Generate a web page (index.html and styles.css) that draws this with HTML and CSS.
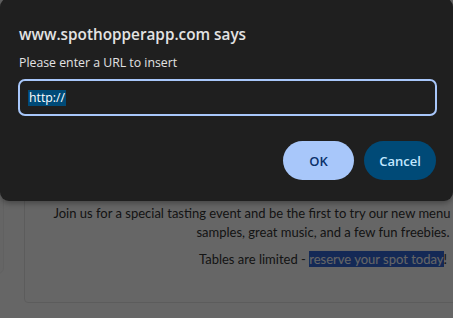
FILE: index.html
```html
<!DOCTYPE html>
<html lang="en">

<head>
	<meta charset="utf-8">
	<title>Event</title>
	<link rel="stylesheet" href="styles.css">
</head>

<body>
	<div class="page">
		<div class="side-panel"></div>
		<div class="event-card">
			<p>Join us for a special tasting event and be the first to try our new menu items and enjoy any free<br>samples, great music, and a few fun freebies.</p>
			<p>Tables are limited - <span class="selected">reserve your spot today</span>!</p>
		</div>
	</div>

	<!-- dim the page behind the prompt -->
	<div class="overlay"></div>

	<div class="dialog">
		<h1 class="dialog-title">www.spothopperapp.com says</h1>
		<p class="dialog-message">Please enter a URL to insert</p>
		<div class="dialog-input"><span class="input-selection">http://</span></div>
		<div class="dialog-buttons">
			<button class="btn btn-ok">OK</button>
			<button class="btn btn-cancel">Cancel</button>
		</div>
	</div>
</body>

</html>
```

FILE: styles.css
```css
/* common css */
* {
	margin: 0;
	padding: 0;
	box-sizing: border-box;
}

body {
	width: 453px;
	height: 318px;
	overflow: hidden;
	background-color: #ffffff;
	font-family: 'Lato', sans-serif;
}

/* page behind the dialog */
.page {
	position: relative;
	height: 318px;
	padding: 60px 0 0 24px;
}

.side-panel {
	position: absolute;
	left: -40px;
	top: 0;
	width: 44px;
	height: 274px;
	border: 1px solid #f2f2f2;
	border-radius: 6px;
	background-color: #fcfcfc;
}

.event-card {
	width: 598px;
	height: 243px;
	padding: 143px 20px 0 20px;
	border: 1px solid #e6e6e6;
	border-radius: 4px;
	text-align: center;
	color: #333333;
	font-size: 13px;
	line-height: 19px;
}

.event-card p {
	margin-bottom: 8px;
}

.selected {
	background-color: #3367d6;
	color: #ffffff;
}

.overlay {
	position: absolute;
	inset: 0;
	background-color: rgba(0, 0, 0, 0.6);
}

/* prompt dialog */
.dialog {
	position: absolute;
	left: 0;
	top: -2px;
	width: 453px;
	height: 203px;
	padding: 26px 16px 0 18px;
	background-color: #1f1f1f;
	border-radius: 9px;
	box-shadow: 0 2px 6px rgba(0, 0, 0, 0.35);
	font-family: 'Open Sans', sans-serif;
	color: #e3e3e3;
}

.dialog-title {
	font-size: 15.3px;
	font-weight: 600;
	line-height: 20px;
	padding-left: 1px;
}

.dialog-message {
	margin-top: 10px;
	font-size: 12.3px;
	line-height: 17px;
	padding-left: 1px;
}

.dialog-input {
	margin-top: 8px;
	width: 419px;
	height: 37px;
	padding: 9px 0 0 8px;
	border: 2px solid #a8c7fa;
	border-radius: 7px;
	font-size: 12.3px;
	line-height: 16px;
	color: #ffffff;
}

.input-selection {
	display: inline-block;
	height: 16px;
	padding: 0 1px;
	background-color: #004a77;
}

.dialog-buttons {
	display: flex;
	justify-content: flex-end;
	gap: 10px;
	margin-top: 25px;
	padding-right: 1px;
}

.btn {
	height: 39px;
	border: none;
	border-radius: 20px;
	font-family: 'Open Sans', sans-serif;
	font-size: 13px;
	font-weight: 600;
}

.btn-ok {
	width: 71px;
	background-color: #a8c7fa;
	color: #0b3068;
}

.btn-cancel {
	width: 72px;
	background-color: #004a77;
	color: #c2e7ff;
}
```
